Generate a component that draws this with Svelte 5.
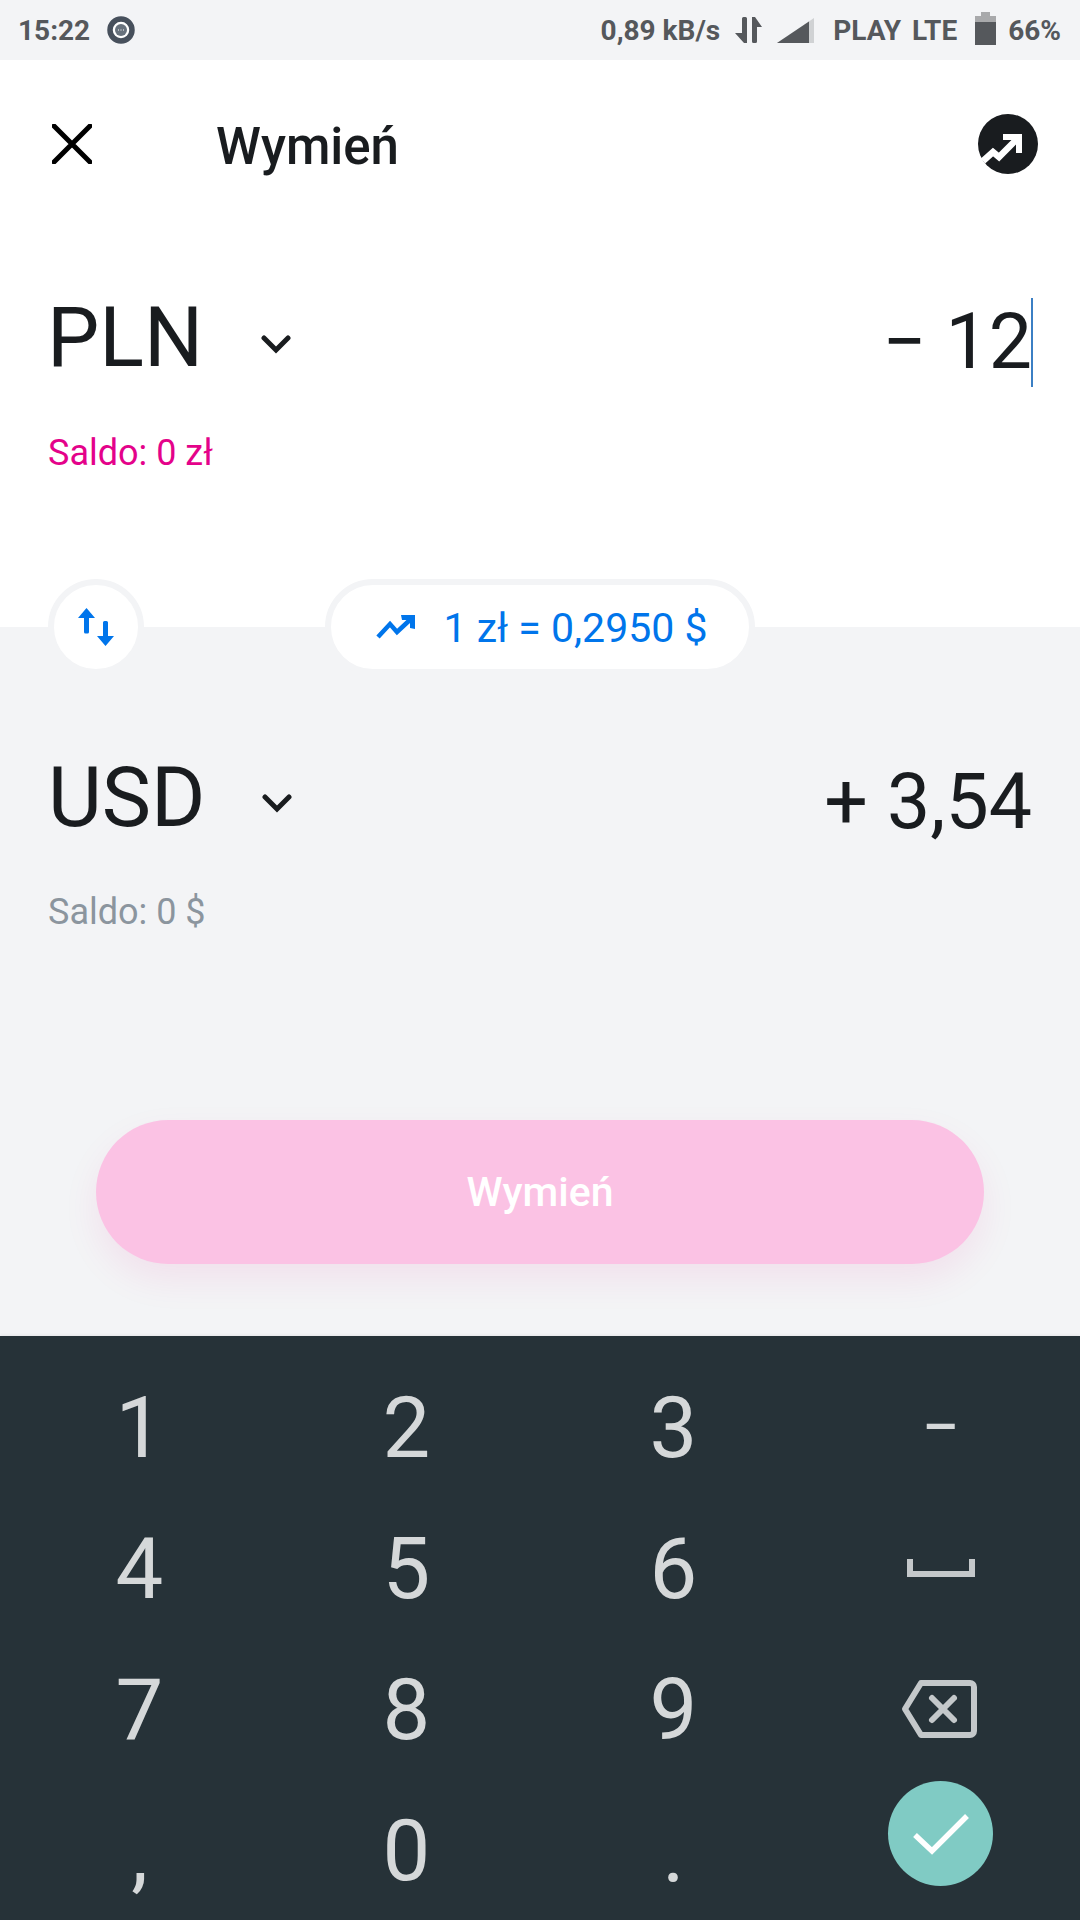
<script>
	const keys = ['1', '2', '3', 'minus', '4', '5', '6', 'space', '7', '8', '9', 'back', ',', '0', '.', 'ok'];
</script>

<div class="screen">
	<div class="status">
		<div class="status-left">
			<span>15:22</span>
			<svg class="chat" width="28" height="28" viewBox="0 0 28 28">
				<circle cx="14" cy="14" r="11" fill="#fff" stroke="#47505c" stroke-width="5.5" />
				<circle cx="14" cy="14" r="6" fill="#68727d" />
				<path d="M11 14h1M13.500 14h1M16 14h1" stroke="#fff" stroke-width="1" />
			</svg>
		</div>
		<div class="status-right">
			<span>0,89 kB/s</span>
			<svg class="gap-a" width="27" height="26" viewBox="0 0 27 26">
				<path d="M7 1.500A1.500 1.500 0 0 1 8.500 0h2A1.500 1.500 0 0 1 12 1.500V26H9L0 16h7zM17 0h3l7 10h-5v14.500a1.500 1.500 0 0 1-1.500 1.500h-2a1.500 1.500 0 0 1-1.500-1.500z" fill="#55585c" />
			</svg>
			<svg class="gap-b" width="37" height="25" viewBox="0 0 37 25">
				<path d="M0 25L37 0v25z" fill="#d0d2d4" />
				<path d="M0 25L32 3.400V25z" fill="#55585c" />
			</svg>
			<span class="gap-c">PLAY</span>
			<span class="gap-d">LTE</span>
			<svg class="gap-e" width="21" height="33" viewBox="0 0 21 33">
				<path d="M6 0h9v4h6v29H0V4h6z" fill="#a8a9ab" />
				<rect y="10" width="21" height="23" fill="#55585c" />
			</svg>
			<span class="gap-f">66%</span>
		</div>
	</div>

	<section class="top">
		<header>
			<svg class="close" width="40" height="40" viewBox="0 0 40 40">
				<path d="M2 2l36 36M38 2L2 38" stroke="#000" stroke-width="5" stroke-linecap="round" />
			</svg>
			<h1>Wymień</h1>
			<svg class="rates" width="60" height="60" viewBox="0 0 60 60">
				<circle cx="30" cy="30" r="30" fill="#191c1f" />
				<path d="M5 47l10-9 6 5 20-20" fill="none" stroke="#fff" stroke-width="6.500" />
				<path d="M25 20h19v19h-6V26H25z" fill="#fff" />
			</svg>
		</header>
		<div class="amount-row">
			<div class="currency">
				<span>PLN</span>
				<svg width="30" height="20" viewBox="0 0 30 20">
					<path d="M3 3l12 12L27 3" fill="none" stroke="#191c1f" stroke-width="5" stroke-linecap="round" />
				</svg>
			</div>
			<div class="value">− 12<i class="caret"></i></div>
		</div>
		<div class="saldo">Saldo: 0 zł</div>
	</section>

	<section class="bottom">
		<div class="pills">
			<div class="swap">
				<svg width="36" height="38" viewBox="0 0 36 38">
					<path d="M8.500 0L17 10h-6v14a1.500 1.500 0 0 1-1.500 1.500h-2A1.500 1.500 0 0 1 6 24V10H0zM27.500 38L19 28h6V14.500a1.500 1.500 0 0 1 1.500-1.500h2a1.500 1.500 0 0 1 1.500 1.500V28h6z" fill="#0075eb" />
				</svg>
			</div>
			<div class="rate">
				<svg width="40" height="24" viewBox="0 0 40 24">
					<path d="M2 22l12-13 7 8L36 3" fill="none" stroke="#0075eb" stroke-width="4.500" />
					<path d="M25 0h14v14l-5-1V5h-8z" fill="#0075eb" />
				</svg>
				<span>1 zł = 0,2950 $</span>
			</div>
		</div>
		<div class="amount-row second">
			<div class="currency">
				<span>USD</span>
				<svg width="30" height="20" viewBox="0 0 30 20">
					<path d="M3 3l12 12L27 3" fill="none" stroke="#191c1f" stroke-width="5" stroke-linecap="round" />
				</svg>
			</div>
			<div class="value">+ 3,54</div>
		</div>
		<div class="saldo muted">Saldo: 0 $</div>
		<button>Wymień</button>
	</section>

	<section class="keyboard">
		{#each keys as key}
			<div class="key">
				{#if key === 'minus'}
					<span class="dash">–</span>
				{:else if key === 'space'}
					<svg width="68" height="18" viewBox="0 0 68 18">
						<path d="M3 0v15h62V0" fill="none" stroke="#c4c8ca" stroke-width="6" />
					</svg>
				{:else if key === 'back'}
					<svg class="back" width="76" height="58" viewBox="0 0 76 58">
						<path d="M20 3h49a4 4 0 0 1 4 4v44a4 4 0 0 1-4 4H20L4 29z" fill="none" stroke="#c4c8ca" stroke-width="6" stroke-linejoin="round" />
						<path d="M31 18l22 22M53 18L31 40" stroke="#c4c8ca" stroke-width="6" stroke-linecap="round" />
					</svg>
				{:else if key === 'ok'}
					<div class="ok">
						<svg width="56" height="42" viewBox="0 0 56 42">
							<path d="M2 22l17 16L54 3" fill="none" stroke="#fff" stroke-width="5.500" />
						</svg>
					</div>
				{:else}
					<span class="digit" class:small={key === ',' || key === '.'}>{key}</span>
				{/if}
			</div>
		{/each}
	</section>
</div>

<style>
	:global(body) {
		margin: 0;
	}

	.screen {
		display: flex;
		flex-direction: column;
		width: 1080px;
		height: 1920px;
		overflow: hidden;
		font-family: Roboto, sans-serif;
		color: #191c1f;
		background: #f3f4f6;
	}

	.status {
		display: flex;
		align-items: center;
		justify-content: space-between;
		flex: 0 0 60px;
		padding: 0 19px 0 18px;
		box-sizing: border-box;
		font-size: 28px;
		font-weight: 700;
		color: #55585c;
	}

	.status-left,
	.status-right {
		display: flex;
		align-items: center;
	}

	.chat {
		margin-left: 17px;
	}

	.gap-a {
		margin-left: 15px;
	}

	.gap-b {
		margin-left: 15px;
	}

	.gap-c {
		margin-left: 19px;
	}

	.gap-d {
		margin-left: 11px;
	}

	.gap-e {
		margin-left: 18px;
		margin-top: -3px;
	}

	.gap-f {
		margin-left: 12px;
	}

	.top {
		flex: 0 0 567px;
		box-sizing: border-box;
		background: #fff;
	}

	header {
		display: flex;
		align-items: center;
		height: 168px;
		padding: 0 42px 0 52px;
	}

	h1 {
		flex: 1;
		margin: 5px 0 0 124px;
		font-size: 51px;
		font-weight: 500;
	}

	.amount-row {
		display: flex;
		align-items: center;
		justify-content: space-between;
		height: 92px;
		margin-top: 63px;
		padding: 0 48px;
	}

	.currency {
		display: flex;
		align-items: center;
		gap: 58px;
		margin-left: -1px;
		font-size: 83px;
	}

	.second .currency {
		gap: 56px;
		margin-left: 0;
	}

	.currency svg {
		margin-top: 16px;
	}

	.second .currency svg {
		margin-top: 13px;
	}

	.value {
		position: relative;
		margin-top: 10px;
		font-size: 77px;
	}

	.caret {
		position: absolute;
		top: 1px;
		right: -1px;
		width: 2px;
		height: 89px;
		background: #3b7fc4;
	}

	.saldo {
		margin-top: 49px;
		padding: 0 48px;
		font-size: 36px;
		line-height: 42px;
		color: #e4028a;
	}

	.saldo.muted {
		margin-top: 48px;
		color: #8b959e;
	}

	.bottom {
		flex: 1;
		display: flex;
		flex-direction: column;
	}

	.pills {
		display: flex;
		align-items: center;
		gap: 181px;
		margin-top: -48px;
		padding-left: 48px;
	}

	.swap,
	.rate {
		display: flex;
		align-items: center;
		justify-content: center;
		box-sizing: border-box;
		height: 96px;
		border: 6px solid #f3f4f6;
		border-radius: 48px;
		background: #fff;
	}

	.swap {
		width: 96px;
	}

	.rate {
		gap: 28px;
		width: 430px;
		padding-left: 3px;
		font-size: 41px;
		color: #0075eb;
	}

	.rate span {
		margin-top: 2px;
	}

	.second {
		margin-top: 76px;
	}

	button {
		align-self: center;
		width: 888px;
		height: 144px;
		margin-top: 187px;
		border: 0;
		border-radius: 72px;
		background: #fbc2e4;
		box-shadow: 0 16px 36px rgba(230, 0, 126, 0.08);
		font-family: inherit;
		font-size: 41px;
		font-weight: 500;
		color: #fff;
	}

	.keyboard {
		display: grid;
		grid-template-columns: repeat(4, 267px);
		grid-auto-rows: 141px;
		flex: 0 0 584px;
		box-sizing: border-box;
		padding: 20px 0 0 6px;
		background: #263238;
		box-shadow: 0 -1px 3px rgba(0, 0, 0, 0.06);
		font-size: 85px;
		color: #d5d8d9;
	}

	.key {
		display: flex;
		align-items: center;
		justify-content: center;
	}

	.digit {
		margin-top: 2px;
	}

	.back {
		margin-right: 4px;
	}

	.small {
		margin-top: 6px;
	}

	.dash {
		font-size: 56px;
		font-weight: 500;
	}

	.ok {
		display: flex;
		align-items: center;
		justify-content: center;
		width: 105px;
		height: 105px;
		margin-bottom: 32px;
		border-radius: 50%;
		background: #80cbc4;
	}
</style>
